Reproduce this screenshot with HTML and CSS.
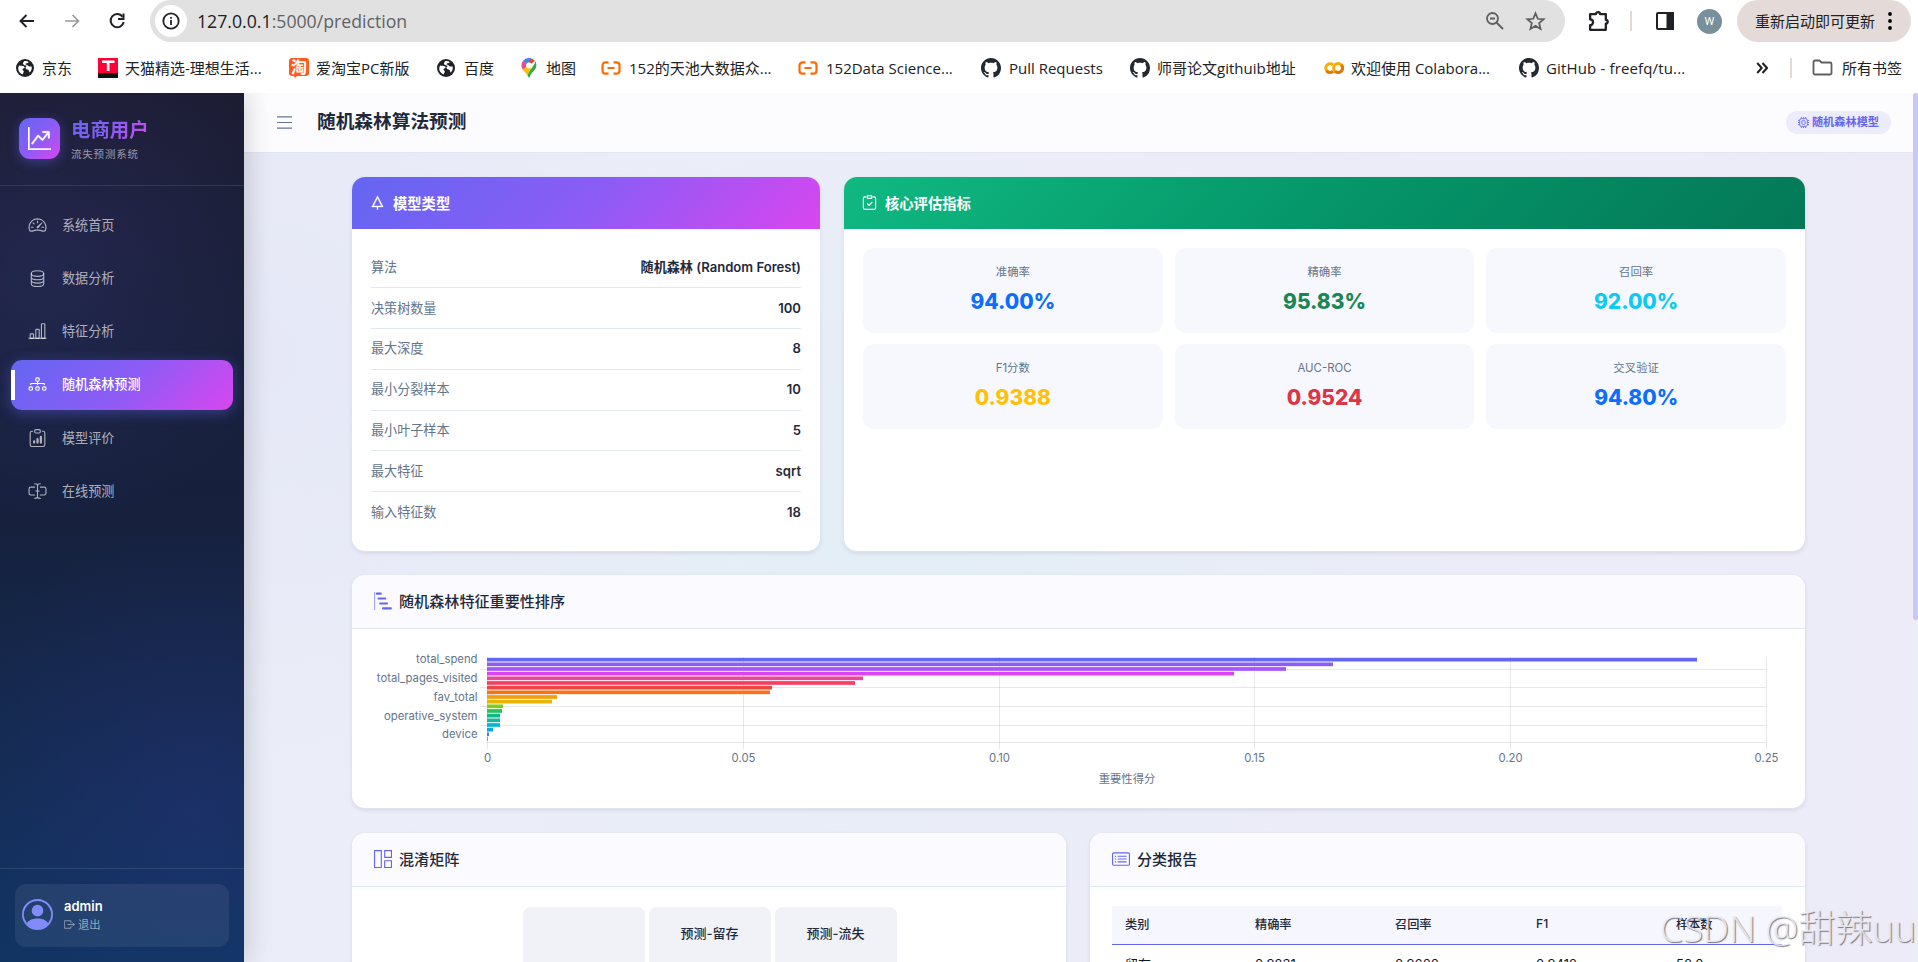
FILE: index.html
```html
<!DOCTYPE html>
<html lang="zh-CN">
<head>
<meta charset="utf-8">
<title>随机森林算法预测</title>
<link rel="stylesheet" href="styles.css">
</head>
<body>
<svg width="0" height="0" class="defs">
  <symbol id="globe" viewBox="0 0 18 18"><circle cx="9" cy="9" r="9" fill="#202124"/><path d="M3 6.500C5 7 8 6.500 8.500 8c.5 1.600-1.500 1-2 2.200-.3 1 1.500 1.300 1.300 2.600-.2 1-1 1.500-1 2.700C3.800 14.500 2 12 2.200 9zM8 2.200c1.500-.3 3.500 0 4.700 1-1 1.300-3 .6-3.200 1.800-.2.900 2 .8 2.600 1.800.5.900 2.500.5 3.600.8.300 2.500-.4 4.600-2 6-.8-.6-.3-2-1.200-2.700-1-.7-2.800-.3-3-1.800-.1-1.200 1.300-1.500 1-2.300C10 6 7.500 6.500 7 5c-.3-1 .6-1.800 1-2.800" fill="#fff"/></symbol>
  <symbol id="github" viewBox="0 0 16 16"><path d="M8 0C3.580 0 0 3.580 0 8c0 3.540 2.290 6.530 5.470 7.590.4.070.55-.17.55-.38 0-.19-.01-.82-.01-1.490-2.010.37-2.530-.49-2.690-.94-.09-.23-.48-.94-.82-1.130-.28-.15-.68-.52-.01-.53.63-.01 1.080.58 1.230.82.72 1.210 1.870.87 2.330.66.070-.52.28-.87.51-1.070-1.780-.2-3.640-.89-3.640-3.950 0-.87.31-1.590.82-2.150-.08-.2-.36-1.020.08-2.120 0 0 .67-.21 2.200.82.64-.18 1.320-.27 2-.27s1.360.09 2 .27c1.530-1.040 2.200-.82 2.200-.82.44 1.100.16 1.920.08 2.120.51.56.82 1.270.82 2.150 0 3.070-1.870 3.750-3.650 3.950.29.25.54.73.54 1.480 0 1.070-.01 1.930-.01 2.200 0 .21.15.46.55.38A8.010 8.010 0 0 0 16 8c0-4.420-3.580-8-8-8" fill="#24292f"/></symbol>
  <symbol id="aliyun" viewBox="0 0 20 14"><path d="M7.500 1.300H4.500A3 3 0 0 0 1.500 4.300v5.400a3 3 0 0 0 3 3h3M12.500 1.300h3a3 3 0 0 1 3 3v5.400a3 3 0 0 1-3 3h-3M6.500 7h7" fill="none" stroke="#ff6a00" stroke-width="2.200"/></symbol>
</svg>

<div class="toolbar">
  <svg class="nav-btn" viewBox="0 0 20 20"><path d="M17 10H4M9.500 4 3.500 10l6 6" fill="none" stroke="#202124" stroke-width="1.900"/></svg>
  <svg class="nav-btn" viewBox="0 0 20 20"><path d="M3 10h13M10.500 4l6 6-6 6" fill="none" stroke="#9a9a9a" stroke-width="1.700"/></svg>
  <svg class="nav-btn" viewBox="0 0 20 20"><path d="M15.600 5.800A6.600 6.600 0 1 0 16.700 11" fill="none" stroke="#202124" stroke-width="2"/><path d="M17.500 2.500V9H11V7h4.500V2.500z" fill="#202124"/></svg>
  <div class="omnibox">
    <span class="info"><svg viewBox="0 0 18 18"><circle cx="9" cy="9" r="7.700" fill="none" stroke="#202124" stroke-width="1.800"/><path d="M8.100 8h1.800v5H8.100zM8.100 5h1.800v1.800H8.100z" fill="#202124"/></svg></span>
    <span class="url"><b>127.0.0.1</b>:5000/prediction</span>
    <svg class="lens" viewBox="0 0 20 20"><circle cx="7.500" cy="7.500" r="5.500" fill="none" stroke="#5f5f5f" stroke-width="1.800"/><path d="M5 7.500h5M11.500 11.500l6.500 6.500" stroke="#5f5f5f" stroke-width="1.900"/></svg>
    <svg class="star" viewBox="0 0 20 20"><path d="M10 2.200l2.200 5.200 5.600.5-4.300 3.700 1.300 5.500-4.800-2.900-4.800 2.900 1.300-5.500L2.200 7.900l5.600-.5z" fill="none" stroke="#5f5f5f" stroke-width="1.700"/></svg>
  </div>
  <svg class="puzzle" viewBox="0 0 22 22"><path d="M3 4h5.500a2 2 0 0 1 4 0H18v5.500a1.800 1.800 0 0 1 0 3.600V19H3v-4.500a2.500 2.500 0 0 0 0-5.500z" fill="none" stroke="#202124" stroke-width="2.200" stroke-linejoin="round"/></svg>
  <span class="vline"></span>
  <svg class="panel" viewBox="0 0 20 20"><rect x="2" y="2" width="16" height="16" rx="1" fill="none" stroke="#202124" stroke-width="2"/><path d="M11.500 1H19v18h-7.500z" fill="#202124"/></svg>
  <span class="profile">W</span>
  <div class="update"><span>重新启动即可更新</span><svg viewBox="0 0 6 20"><circle cx="3" cy="3" r="1.900"/><circle cx="3" cy="10" r="1.900"/><circle cx="3" cy="17" r="1.900"/></svg></div>
</div>

<div class="bookmarks">
  <div class="bm bm-1"><svg width="18" height="18"><use href="#globe"/></svg>京东</div>
  <div class="bm bm-2"><svg width="20" height="20" viewBox="0 0 20 20"><path d="M0 0h20v15H0z" fill="#ff0036"/><path d="M0 15h20v5H0z" fill="#111"/><path d="M4 2.500h12.500v2.600h-5V13H8.800V5.100H4z" fill="#fff"/></svg>天猫精选-理想生活...</div>
  <div class="bm bm-3"><svg width="20" height="20" viewBox="0 0 20 20"><path d="M3 0h14a3 3 0 0 1 3 3v12a3 3 0 0 1-3 3H8l-2 2-1-2H3a3 3 0 0 1-3-3V3a3 3 0 0 1 3-3" fill="#ff5a1f"/><text x="2" y="14.500" class="tao">淘</text></svg>爱淘宝PC新版</div>
  <div class="bm bm-4"><svg width="18" height="18"><use href="#globe"/></svg>百度</div>
  <div class="bm bm-5"><svg width="16" height="20" viewBox="0 0 16 20"><path d="M8 0a7.500 7.500 0 0 1 5.800 2.800L8 8z" fill="#ea4335"/><path d="M2.200 2.800A7.500 7.500 0 0 1 10 .3L6 8z" fill="#4285f4"/><path d="M2.200 2.800 8 8l-5.800 4C-.2 9 0 5 2.200 2.800" fill="#ea4d8a"/><path d="M2 11.500 6 8l5 3-5 6c-1-2.200-3-3.500-4-5.500" fill="#fbbc04"/><path d="M13.800 2.800c2 2.500 2.200 6 .2 8.700C12 14 10 15 9 18.500c-.2 1.300-1.500 1.300-1.900 0L6.300 17 14 5z" fill="#34a853"/><circle cx="8" cy="7.500" r="2.900" fill="#fff"/></svg>地图</div>
  <div class="bm bm-6"><svg width="20" height="14"><use href="#aliyun"/></svg>152的天池大数据众...</div>
  <div class="bm bm-7"><svg width="20" height="14"><use href="#aliyun"/></svg>152Data Science...</div>
  <div class="bm bm-8"><svg width="20" height="20"><use href="#github"/></svg>Pull Requests</div>
  <div class="bm bm-9"><svg width="20" height="20"><use href="#github"/></svg>师哥论文githuib地址</div>
  <div class="bm bm-10"><svg width="20" height="14" viewBox="0 0 20 14"><circle cx="14" cy="7" r="4.400" fill="none" stroke="#f9ab00" stroke-width="3"/><path d="M9 3.800A4.300 4.300 0 1 0 9 10.200" fill="none" stroke="#f9ab00" stroke-width="3"/><path d="M2.500 9.800A4.300 4.300 0 0 0 9 10.200M11 10.200a4.400 4.400 0 0 0 6.300-6.200" fill="none" stroke="#e8710a" stroke-width="3"/></svg>欢迎使用 Colabora...</div>
  <div class="bm bm-11"><svg width="20" height="20"><use href="#github"/></svg>GitHub - freefq/tu...</div>
  <svg class="more" viewBox="0 0 12 12"><path d="M1.200 1l4.500 5-4.500 5M6.500 1 11 6l-4.500 5" fill="none" stroke="#202124" stroke-width="2"/></svg>
  <span class="vline"></span>
  <div class="bm all"><svg width="21" height="17" viewBox="0 0 21 17"><path d="M1.500 14V3a1.500 1.500 0 0 1 1.500-1.500h4.500l2 2H18A1.500 1.500 0 0 1 19.500 5v9a1.500 1.500 0 0 1-1.500 1.500H3A1.500 1.500 0 0 1 1.500 14z" fill="none" stroke="#5f5f5f" stroke-width="1.800"/></svg>所有书签</div>
</div>

<div class="page">
  <aside class="sidebar">
    <div class="brand">
      <span class="logo"><svg viewBox="0 0 16 16"><path fill-rule="evenodd" d="M0 0h1v15h15v1H0zm10 3.500a.5.5 0 0 1 .5-.5h4a.5.5 0 0 1 .5.5v4a.5.5 0 0 1-1 0V4.900l-3.613 4.417a.5.5 0 0 1-.74.037L7.060 6.767l-3.656 5.027a.5.5 0 0 1-.808-.588l4-5.500a.5.5 0 0 1 .758-.06l2.609 2.610L13.445 4H10.500a.5.5 0 0 1-.5-.5"/></svg></span>
      <div><div class="brand-name">电商用户</div><div class="brand-sub">流失预测系统</div></div>
    </div>
    <nav class="menu">
      <a class="item"><svg viewBox="0 0 16 16"><path d="M8 4a.5.5 0 0 1 .5.5V6a.5.5 0 0 1-1 0V4.500A.5.5 0 0 1 8 4M3.732 5.732a.5.5 0 0 1 .707 0l.915.914a.5.5 0 1 1-.708.708l-.914-.915a.5.5 0 0 1 0-.707M2 10a.5.5 0 0 1 .5-.5h1.586a.5.5 0 0 1 0 1H2.500A.5.5 0 0 1 2 10m9.500 0a.5.5 0 0 1 .5-.5h1.500a.5.5 0 0 1 0 1H12a.5.5 0 0 1-.5-.5m.754-4.246a.39.39 0 0 0-.527-.02L7.547 9.310a.91.91 0 1 0 1.302 1.258l3.434-4.297a.39.39 0 0 0-.029-.518z"/><path fill-rule="evenodd" d="M0 10a8 8 0 1 1 15.547 2.661c-.442 1.253-1.845 1.602-2.932 1.250C11.309 13.488 9.475 13 8 13c-1.474 0-3.310.488-4.615.911-1.087.352-2.490.003-2.932-1.250A8 8 0 0 1 0 10m8-7a7 7 0 0 0-6.603 9.329c.203.575.923.876 1.680.63C4.397 12.533 6.358 12 8 12s3.604.532 4.923.96c.757.245 1.477-.056 1.680-.631A7 7 0 0 0 8 3"/></svg><span>系统首页</span></a>
      <a class="item"><svg viewBox="0 0 16 16"><g fill="none" stroke="currentColor"><ellipse cx="8" cy="4" rx="5.500" ry="2.500"/><path d="M2.500 4v9c0 1.400 2.500 2.500 5.500 2.500s5.500-1.100 5.500-2.500V4M2.500 7c0 1.400 2.500 2.500 5.500 2.500s5.500-1.100 5.500-2.500M2.500 10c0 1.400 2.500 2.500 5.500 2.500s5.500-1.100 5.500-2.500"/></g></svg><span>数据分析</span></a>
      <a class="item"><svg viewBox="0 0 16 16"><path d="M4 11H2v3h2zm5-4H7v7h2zm5-5v12h-2V2zm-2-1a1 1 0 0 0-1 1v12a1 1 0 0 0 1 1h2a1 1 0 0 0 1-1V2a1 1 0 0 0-1-1zM6 7a1 1 0 0 1 1-1h2a1 1 0 0 1 1 1v7a1 1 0 0 1-1 1H7a1 1 0 0 1-1-1zm-5 4a1 1 0 0 1 1-1h2a1 1 0 0 1 1 1v3a1 1 0 0 1-1 1H2a1 1 0 0 1-1-1z" fill-rule="evenodd"/><path d="M0 14h16v1H0z"/></svg><span>特征分析</span></a>
      <a class="item active"><svg viewBox="0 0 16 16"><path fill-rule="evenodd" d="M6 3.500A1.500 1.500 0 0 1 7.500 2h1A1.500 1.500 0 0 1 10 3.500v1A1.500 1.500 0 0 1 8.500 6v1H14a.5.5 0 0 1 .5.5v1a.5.5 0 0 1-1 0V8h-5v.5a.5.5 0 0 1-1 0V8h-5v.5a.5.5 0 0 1-1 0v-1A.5.5 0 0 1 2 7h5.500V6A1.500 1.500 0 0 1 6 4.500zM8.500 5a.5.5 0 0 0 .5-.5v-1a.5.5 0 0 0-.5-.5h-1a.5.5 0 0 0-.5.5v1a.5.5 0 0 0 .5.5zM0 11.500A1.500 1.500 0 0 1 1.500 10h1A1.500 1.500 0 0 1 4 11.500v1A1.500 1.500 0 0 1 2.500 14h-1A1.500 1.500 0 0 1 0 12.500zm1.500-.5a.5.5 0 0 0-.5.5v1a.5.5 0 0 0 .5.5h1a.5.5 0 0 0 .5-.5v-1a.5.5 0 0 0-.5-.5zm4.500.5A1.500 1.500 0 0 1 7.500 10h1a1.500 1.500 0 0 1 1.500 1.500v1A1.500 1.500 0 0 1 8.500 14h-1A1.500 1.500 0 0 1 6 12.500zm1.500-.5a.5.5 0 0 0-.5.5v1a.5.5 0 0 0 .5.5h1a.5.5 0 0 0 .5-.5v-1a.5.5 0 0 0-.5-.5zm4.500.5a1.500 1.500 0 0 1 1.500-1.500h1a1.500 1.500 0 0 1 1.500 1.500v1a1.500 1.500 0 0 1-1.500 1.500h-1a1.500 1.500 0 0 1-1.500-1.500zm1.500-.5a.5.5 0 0 0-.5.5v1a.5.5 0 0 0 .5.5h1a.5.5 0 0 0 .5-.5v-1a.5.5 0 0 0-.5-.5z"/></svg><span>随机森林预测</span></a>
      <a class="item"><svg viewBox="0 0 16 16"><path d="M4 11a1 1 0 1 1 2 0v1a1 1 0 1 1-2 0zm6-4a1 1 0 1 1 2 0v5a1 1 0 1 1-2 0zM7 9a1 1 0 0 1 2 0v3a1 1 0 1 1-2 0z"/><path d="M4 1.500H3a2 2 0 0 0-2 2V14a2 2 0 0 0 2 2h10a2 2 0 0 0 2-2V3.500a2 2 0 0 0-2-2h-1v1h1a1 1 0 0 1 1 1V14a1 1 0 0 1-1 1H3a1 1 0 0 1-1-1V3.500a1 1 0 0 1 1-1h1z"/><path fill-rule="evenodd" d="M9.500 1a.5.5 0 0 1 .5.500v1a.5.5 0 0 1-.5.5h-3a.5.5 0 0 1-.5-.5v-1a.5.5 0 0 1 .5-.5zm-3-1A1.500 1.500 0 0 0 5 1.500v1A1.500 1.500 0 0 0 6.500 4h3A1.500 1.500 0 0 0 11 2.500v-1A1.500 1.500 0 0 0 9.500 0z"/></svg><span>模型评价</span></a>
      <a class="item"><svg viewBox="0 0 16 16"><g fill="none" stroke="currentColor" stroke-linecap="round"><path d="M5.500 4.500H2A1.500 1.500 0 0 0 .5 6v4A1.500 1.500 0 0 0 2 11.500h3.500M10.500 4.500H14A1.500 1.500 0 0 1 15.500 6v4a1.500 1.500 0 0 1-1.500 1.500h-3.500M8 3v10M5.500 1.500C7 1.500 8 2 8 3c0-1 1-1.500 2.500-1.500M5.500 14.500C7 14.500 8 14 8 13c0 1 1 1.500 2.500 1.500M6.500 8h3"/></g></svg><span>在线预测</span></a>
    </nav>
    <div class="account">
      <div class="account-card">
        <svg class="avatar" viewBox="0 0 16 16"><path d="M11 6a3 3 0 1 1-6 0 3 3 0 0 1 6 0"/><path fill-rule="evenodd" d="M0 8a8 8 0 1 1 16 0A8 8 0 0 1 0 8m8-7a7 7 0 0 0-5.468 11.370C3.242 11.226 4.805 10 8 10s4.757 1.225 5.468 2.370A7 7 0 0 0 8 1"/></svg>
        <div><div class="user">admin</div><div class="logout"><svg viewBox="0 0 16 16"><path d="M10 5.500V3a.5.5 0 0 0-.5-.5H1a.5.5 0 0 0-.5.5v10a.5.5 0 0 0 .5.5h8.500a.5.5 0 0 0 .5-.5v-2.500M5 8h10M12 5l3 3-3 3" fill="none" stroke="currentColor" stroke-width="1.200"/></svg>退出</div></div>
      </div>
    </div>
  </aside>

  <main class="main">
    <header class="topbar">
      <svg class="burger" viewBox="0 0 16 14"><path d="M0 1h16M0 7h16M0 13h16" stroke="#64748b" stroke-width="1.300"/></svg>
      <h1>随机森林算法预测</h1>
      <span class="badge"><svg viewBox="0 0 16 16"><g fill="none" stroke="currentColor" stroke-width="1.300"><rect x="2.500" y="2.500" width="11" height="11" rx="2"/><rect x="5.500" y="5.500" width="5" height="5" rx="1"/><path d="M5 2V0M8 2V0M11 2V0M5 16v-2M8 16v-2M11 16v-2M2 5H0M2 8H0M2 11H0M16 5h-2M16 8h-2M16 11h-2"/></g></svg>随机森林模型</span>
    </header>
    <div class="content">
      <div class="row top-row">
        <section class="card">
          <div class="band violet"><svg viewBox="0 0 16 16"><path d="M8 .8 1.800 12.700H7.500V15.700h1v-3H14.200zM8 3.300l4.200 8.300H3.800z" fill-rule="evenodd" stroke="currentColor" stroke-width=".4"/></svg><span>模型类型</span></div>
          <dl class="params">
            <div><dt>算法</dt><dd>随机森林 (Random Forest)</dd></div>
            <div><dt>决策树数量</dt><dd>100</dd></div>
            <div><dt>最大深度</dt><dd>8</dd></div>
            <div><dt>最小分裂样本</dt><dd>10</dd></div>
            <div><dt>最小叶子样本</dt><dd>5</dd></div>
            <div><dt>最大特征</dt><dd>sqrt</dd></div>
            <div><dt>输入特征数</dt><dd>18</dd></div>
          </dl>
        </section>
        <section class="card">
          <div class="band green"><svg viewBox="0 0 16 16"><g fill="none" stroke="currentColor" stroke-width="1.300"><path d="M4.500 2H3A1.500 1.500 0 0 0 1.500 3.500V14A1.500 1.500 0 0 0 3 15.300h10a1.500 1.500 0 0 0 1.500-1.500V3.500A1.500 1.500 0 0 0 13 2h-1.500" /><rect x="5.500" y=".7" width="5" height="2.800" rx="1"/><path d="M5.500 9l2 2 3.500-3.500"/></g></svg><span>核心评估指标</span></div>
          <div class="metrics">
            <div class="metric"><span>准确率</span><b class="c-blue">94.00%</b></div>
            <div class="metric"><span>精确率</span><b class="c-green">95.83%</b></div>
            <div class="metric"><span>召回率</span><b class="c-cyan">92.00%</b></div>
            <div class="metric"><span>F1分数</span><b class="c-yellow">0.9388</b></div>
            <div class="metric"><span>AUC-ROC</span><b class="c-red">0.9524</b></div>
            <div class="metric"><span>交叉验证</span><b class="c-blue">94.80%</b></div>
          </div>
        </section>
      </div>

      <section class="card chart-card">
        <div class="head"><svg viewBox="0 0 16 16"><path d="M.5 0v16" stroke="currentColor" stroke-opacity=".55"/><path d="M2.500 1.500H6M4 5.800h6M5.500 10.200h6M8 14.500h7" stroke="currentColor" stroke-width="1.900" stroke-linecap="round"/></svg><span>随机森林特征重要性排序</span></div>
        <svg class="chart" viewBox="0 0 1452 178" width="1452" height="178">
          <g stroke="#000" stroke-opacity=".09" fill="none">
            <path d="M127 40.500H1413M127 58.500H1413M127 77.500H1413M127 96.500H1413M134 113.500H1413"/>
            <path d="M134.500 28v92M390.500 28v92M646.500 28v92M901.500 28v92M1157.500 28v92M1413.500 28v92"/>
          </g>
          <g transform="translate(134 28.800)">
            <rect y="0" width="1210" height="3.700" fill="#6366f1"/>
            <rect y="4.670" width="846" height="3.700" fill="#8b5cf6"/>
            <rect y="9.330" width="799" height="3.700" fill="#a855f7"/>
            <rect y="14" width="747" height="3.700" fill="#d946ef"/>
            <rect y="18.670" width="376" height="3.700" fill="#ec4899"/>
            <rect y="23.330" width="368" height="3.700" fill="#f43f5e"/>
            <rect y="28" width="285" height="3.700" fill="#ef4444"/>
            <rect y="32.670" width="283" height="3.700" fill="#f97316"/>
            <rect y="37.330" width="70" height="3.700" fill="#f59e0b"/>
            <rect y="42" width="65" height="3.700" fill="#eab308"/>
            <rect y="46.670" width="16" height="3.700" fill="#84cc16"/>
            <rect y="51.330" width="15" height="3.700" fill="#22c55e"/>
            <rect y="56" width="13" height="3.700" fill="#10b981"/>
            <rect y="60.670" width="13" height="3.700" fill="#14b8a6"/>
            <rect y="65.330" width="13" height="3.700" fill="#06b6d4"/>
            <rect y="70" width="6" height="3.700" fill="#0ea5e9"/>
            <rect y="74.670" width="2" height="3.700" fill="#3b82f6"/>
            <rect y="79.330" width=".7" height="3.700" fill="#6366f1"/>
          </g>
          <g class="y-labels"><text x="124.500" y="34">total_spend</text><text x="124.500" y="53">total_pages_visited</text><text x="124.500" y="71.500">fav_total</text><text x="124.500" y="90.500">operative_system</text><text x="124.500" y="109">device</text></g>
          <g class="x-labels"><text x="134.500" y="133">0</text><text x="390.500" y="133">0.05</text><text x="646.500" y="133">0.10</text><text x="901.500" y="133">0.15</text><text x="1157.500" y="133">0.20</text><text x="1413.500" y="133">0.25</text><text x="774" y="154">重要性得分</text></g>
        </svg>
      </section>

      <div class="row bottom-row">
        <section class="card">
          <div class="head"><svg viewBox="0 0 16 16"><g fill="none" stroke="currentColor"><path d="M.5.500h6v15h-6zM9.500.500h6v6h-6zM9.500 9.500h6v6h-6z"/></g></svg><span>混淆矩阵</span></div>
          <div class="matrix"><span></span><span>预测-留存</span><span>预测-流失</span></div>
        </section>
        <section class="card">
          <div class="head"><svg viewBox="0 0 16 16"><g fill="none" stroke="currentColor"><rect x=".5" y="2.500" width="15" height="11" rx="1"/><path d="M5 5.500h8M5 8h8M5 10.500h8M2.500 5.500h1.200M2.500 8h1.200M2.500 10.500h1.200"/></g></svg><span>分类报告</span></div>
          <table class="report">
            <thead><tr><th>类别</th><th>精确率</th><th>召回率</th><th>F1</th><th>样本数</th></tr></thead>
            <tbody><tr><td>留存</td><td>0.9231</td><td>0.9600</td><td>0.9412</td><td>50.0</td></tr></tbody>
          </table>
        </section>
      </div>
    </div>
  </main>
  <div class="scrollbar"><div class="thumb"></div></div>
</div>
<div class="watermark">CSDN @甜辣uu</div>
</body>
</html>
```

FILE: styles.css
```css
* { box-sizing: border-box; }
html { height: 962px; overflow: hidden; }
body {
  margin: 0;
  width: 1918px;
  height: 962px;
  overflow: hidden;
  background: #fff;
  font-family: Inter, "Noto Sans CJK SC", sans-serif;
  color: #1e293b;
}
svg { display: block; flex: none; }
.defs { position: absolute; }

/* browser toolbar */
.toolbar {
  display: flex;
  align-items: center;
  height: 42px;
  padding-left: 17px;
  font-family: "Open Sans", "Noto Sans CJK SC", sans-serif;
}
.nav-btn { width: 20px; height: 20px; margin-right: 25px; }
.omnibox {
  display: flex;
  align-items: center;
  width: 1415px;
  height: 42px;
  margin-left: -2px;
  padding: 0 19px 0 5px;
  border-radius: 21px;
  background: #e1e1e1;
}
.info {
  display: flex;
  align-items: center;
  justify-content: center;
  width: 32px;
  height: 32px;
  border-radius: 50%;
  background: #fff;
}
.info svg { width: 18px; height: 18px; }
.url { flex: 1; margin-left: 10px; font-size: 17.700px; line-height: 24px; color: #606367; }
.url b { font-weight: 400; color: #202124; }
.lens { width: 20px; height: 20px; margin-right: 20px; }
.star { width: 21px; height: 21px; }
.puzzle { width: 23px; height: 23px; margin-left: 22px; }
.vline { flex: none; width: 2px; height: 20px; background: #e3dad7; }
.toolbar .vline { margin: 0 23px 0 20px; }
.panel { width: 20px; height: 20px; }
.profile {
  width: 25px;
  height: 25px;
  margin-left: 22px;
  border-radius: 50%;
  background: #78909c;
  color: #fff;
  font: 11px/25px Roboto, sans-serif;
  text-align: center;
}
.update {
  display: flex;
  align-items: center;
  justify-content: space-between;
  width: 174px;
  height: 42px;
  margin-left: 15px;
  padding: 0 18px;
  border-radius: 21px;
  background: #e4dbd8;
  font-size: 15px;
  line-height: 20px;
  white-space: nowrap;
  color: #202124;
}
.update svg { width: 6px; height: 20px; }

.bookmarks {
  display: flex;
  align-items: center;
  height: 51px;
  padding-left: 16px;
  font: 15px/20px "Open Sans", "Noto Sans CJK SC", sans-serif;
  color: #202124;
}
.bm { display: flex; flex: none; align-items: center; gap: 8px; white-space: nowrap; }
.bm-1 { width: 82px; }
.bm-2 { width: 191px; gap: 7px; }
.bm-3 { width: 148px; gap: 7px; }
.bm-4 { width: 84px; gap: 9px; }
.bm-5 { width: 80px; gap: 9px; }
.bm-6 { width: 197px; }
.bm-7 { width: 183px; }
.bm-8 { width: 149px; }
.bm-9 { width: 194px; gap: 7px; }
.bm-10 { width: 195px; gap: 7px; }
.bm-11 { width: 237px; gap: 7px; letter-spacing: .15px; }
.tao { font: 700 16px "Noto Sans CJK SC", sans-serif; fill: #fff; }
.more { width: 12px; height: 12px; }
.bookmarks .vline { margin: 0 20px 0 22px; }
.all { gap: 9px; }

/* application */
.page { display: flex; height: 869px; overflow: hidden; background: #ededf8; }
.sidebar {
  position: relative;
  z-index: 2;
  display: flex;
  flex: none;
  flex-direction: column;
  width: 244px;
  background:
    radial-gradient(circle at 20% 20%, rgba(99, 102, 241, .12), transparent 260px),
    radial-gradient(circle at 80% 82%, rgba(99, 70, 241, .12), transparent 280px),
    linear-gradient(180deg, #1c1c32, #16213e 50%, #0f3460);
  box-shadow: 4px 0 24px rgba(0, 0, 0, .16);
}
.brand {
  display: flex;
  gap: 11px;
  height: 93px;
  padding: 25px 19px 0;
  border-bottom: 1px solid rgba(255, 255, 255, .1);
}
.logo {
  display: flex;
  align-items: center;
  justify-content: center;
  width: 41px;
  height: 41px;
  border-radius: 11px;
  background: linear-gradient(135deg, #6366f1, #8b5cf6 50%, #d946ef);
  box-shadow: 0 3px 12px rgba(99, 102, 241, .4);
}
.logo svg { width: 23px; height: 23px; fill: #fff; stroke: #fff; stroke-width: .35; }
.brand-name {
  width: 78px;
  font-size: 19.400px;
  font-weight: 700;
  line-height: 25px;
  background: linear-gradient(135deg, #6366f1, #8b5cf6 50%, #d946ef);
  -webkit-background-clip: text;
  background-clip: text;
  color: transparent;
}
.brand-sub { margin-top: 4px; font-size: 10.500px; line-height: 16px; letter-spacing: .8px; color: rgba(255, 255, 255, .55); }
.menu { display: flex; flex-direction: column; gap: 3.300px; padding: 14px 11px; }
.item {
  display: flex;
  align-items: center;
  gap: 15px;
  height: 50px;
  padding-left: 17px;
  border-radius: 11px;
  font-size: 13.100px;
  color: rgba(255, 255, 255, .65);
}
.item span, .band span { padding-bottom: 2px; }
.item svg { width: 19px; height: 18px; margin-bottom: 1px; fill: currentColor; }
.item.active {
  background:
    linear-gradient(#fff, #fff) 0 10px / 4px 30px no-repeat,
    linear-gradient(135deg, #6366f1, #8b5cf6 50%, #d946ef);
  box-shadow: 0 3px 14px rgba(99, 102, 241, .42);
  color: #fff;
  font-weight: 500;
}
.account { margin-top: auto; height: 94px; padding: 15px; border-top: 1px solid rgba(255, 255, 255, .1); }
.account-card {
  display: flex;
  align-items: center;
  gap: 11px;
  height: 63px;
  padding: 0 0 2px 7px;
  border-radius: 11px;
  background: rgba(255, 255, 255, .07);
}
.avatar { width: 31px; height: 31px; fill: #818cf8; }
.user { font-size: 13px; font-weight: 600; line-height: 20px; color: #fff; }
.logout { display: flex; align-items: center; gap: 3px; font-size: 11.300px; line-height: 18px; color: rgba(255, 255, 255, .55); }
.logout svg { width: 11px; height: 11px; }

.main {
  flex: 1;
  min-width: 0;
  background:
    radial-gradient(ellipse 620px 420px at 40% 50%, rgba(222, 238, 244, .65), transparent),
    radial-gradient(ellipse 500px 420px at 0 30%, rgba(226, 229, 245, .7), transparent),
    linear-gradient(90deg, #ebeef8, #edebf8);
}
.topbar {
  display: flex;
  align-items: center;
  height: 60px;
  padding: 0 22px 0 33px;
  border-bottom: 1px solid #e2e6f0;
  background: #fcfcfe;
}
.burger { width: 15px; height: 13px; }
h1 { margin: 0 0 0 25px; padding-bottom: 1px; flex: 1; font-size: 18.700px; font-weight: 600; line-height: 28px; }
.badge {
  display: flex;
  align-items: center;
  justify-content: center;
  gap: 3px;
  width: 105px;
  height: 23px;
  border-radius: 12px;
  background: #ececfd;
  color: #6366f1;
  font-size: 11.200px;
  font-weight: 600;
  line-height: 21px;
}
.badge svg { width: 11px; height: 11px; }
.content { width: 1453px; margin: 0 auto; padding-top: 24px; }
.row { display: grid; gap: 24px; }
.top-row { grid-template-columns: 468px 961px; height: 374px; }
.card {
  overflow: hidden;
  border-radius: 13px;
  background: #fff;
  box-shadow: 0 0 0 1px rgba(226, 232, 240, .6), 0 2px 4px rgba(30, 41, 90, .12);
}
.band {
  display: flex;
  align-items: center;
  gap: 8px;
  height: 52px;
  padding-left: 18px;
  color: #fff;
  font-size: 14.300px;
  font-weight: 700;
}
.band svg { width: 15px; height: 15px; margin-bottom: 1px; fill: currentColor; }
.violet { background: linear-gradient(135deg, #6366f1, #8b5cf6 50%, #d946ef); }
.green { background: linear-gradient(135deg, #10b981, #059669 50%, #047857); }
.params { margin: 0; padding: 18.500px 19px 0; font-size: 13.100px; }
.params div {
  display: flex;
  align-items: center;
  justify-content: space-between;
  height: 40.750px;
  border-bottom: 1px solid #e2e8f0;
}
.params div:last-child { border-bottom: 0; }
.params dt { padding-bottom: 2px; color: #64748b; }
.params dd { margin: 0; padding-bottom: 1px; font-weight: 600; }
.metrics { display: grid; grid-template-columns: repeat(3, 1fr); gap: 11px 12px; padding: 19px; }
.metric {
  display: flex;
  flex-direction: column;
  align-items: center;
  height: 85px;
  padding-top: 14px;
  border-radius: 11px;
  background: #f7f8fd;
}
.metric span { font-size: 11.400px; line-height: 20px; color: #64748b; }
.metric b { margin-top: 6px; font-size: 20.900px; font-weight: 800; line-height: 28px; }
.c-blue { color: #0d6efd; }
.c-green { color: #198754; }
.c-cyan { color: #0dcaf0; }
.c-yellow { color: #ffc107; }
.c-red { color: #dc3545; }

.chart-card { height: 233px; margin: 24px 0 25px; }
.head {
  display: flex;
  align-items: center;
  gap: 7px;
  height: 54px;
  padding-left: 22px;
  border-bottom: 1px solid #e2e8f0;
  background: #fbfbff;
  font-size: 15.100px;
  font-weight: 500;
}
.head span { padding-bottom: 3px; }
.head svg { width: 18px; height: 18px; margin-bottom: 1px; color: #6366f1; }
.chart { margin-left: 1px; }
.chart text { font-size: 11.300px; fill: #64748b; }
.y-labels { text-anchor: end; }
.x-labels { text-anchor: middle; }

.bottom-row { grid-template-columns: 714px 715px; height: 240px; }
.matrix { display: flex; justify-content: center; gap: 4px; padding: 20px 0 0 1px; }
.matrix span {
  width: 122px;
  height: 98px;
  padding-top: 15px;
  border-radius: 8px;
  background: #f1f2f7;
  font-size: 13px;
  font-weight: 500;
  line-height: 22px;
  text-align: center;
}
.report { width: 670px; margin: 19px 0 0 22px; border-collapse: collapse; table-layout: fixed; font-size: 13px; }
.report th, .report td { padding: 0 0 0 13px; text-align: left; }
.report th { height: 38px; padding-bottom: 2px; border-bottom: 1.500px solid #6366f1; background: #f5f6fe; font-size: 12.200px; font-weight: 500; }
.report td { height: 39px; color: #111827; }
.report th:nth-child(1) { width: 130px; }
.report th:nth-child(2) { width: 140px; }
.report th:nth-child(3) { width: 141px; }
.report th:nth-child(4) { width: 140px; }

.scrollbar { width: 5px; }
.thumb { height: 527px; border-radius: 3px; background: #c6c8f5; }
.watermark {
  position: absolute;
  right: 2px;
  top: 904px;
  font: 300 37px/48px "Open Sans", "Noto Sans CJK SC", sans-serif;
  white-space: nowrap;
  color: rgba(238, 238, 242, .9);
  text-shadow: 1px 1px 1px rgba(90, 90, 100, .8);
}
```
